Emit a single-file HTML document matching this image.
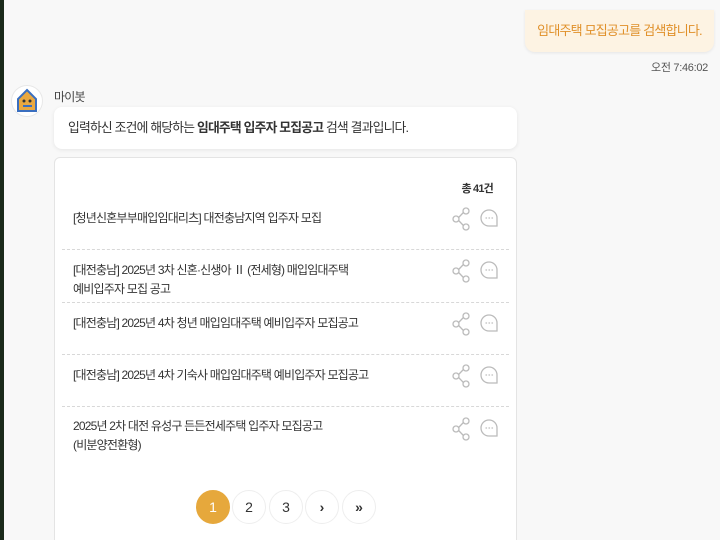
<!DOCTYPE html>
<html><head><meta charset="utf-8"><style>
*{margin:0;padding:0;box-sizing:border-box}
html,body{width:720px;height:540px;overflow:hidden}
body{background:#f8f8f8;font-family:"Liberation Sans","Noto Sans CJK KR",sans-serif;position:relative;color:#333;letter-spacing:-0.8px}
.strip{position:absolute;left:0;top:0;width:4px;height:540px;background:#1a2a1a}
.ubub{position:absolute;left:525px;top:10px;width:189px;height:42px;background:#fdf3e3;border-radius:0 0 10px 10px;box-shadow:0 1px 3px rgba(0,0,0,.08);color:#e0902a;font-size:13px;line-height:42px;text-align:center;white-space:nowrap}
.time{position:absolute;right:12px;top:59px;font-size:11px;color:#555;letter-spacing:-0.3px}
.av{position:absolute;left:11px;top:85px;width:32px;height:32px;border-radius:50%;background:#fff;border:1px solid #e8e8e8}
.name{position:absolute;left:54px;top:88px;font-size:12px;color:#444}
.bub{position:absolute;left:54px;top:107px;width:463px;height:42px;background:#fff;border-radius:8px;box-shadow:0 1px 4px rgba(0,0,0,.08);font-size:12.8px;line-height:42px;padding-left:14px;color:#333;white-space:nowrap}
.card{position:absolute;left:54px;top:157px;width:463px;height:400px;background:#fff;border:1px solid #e4e4e4;border-radius:6px}
.total{position:absolute;right:23px;top:22px;font-size:11px;font-weight:bold;color:#333}
.item{position:absolute;left:8px;width:447px;border-bottom:1px dashed #d8d8d8;height:53px}
.item span{position:absolute;left:11px;top:0;font-size:12px;line-height:19px;color:#333;white-space:nowrap}
.pg{position:absolute;top:490px;width:34px;height:34px;border-radius:50%;border:1px solid #eee;background:#fff;text-align:center;line-height:32px;font-size:14px;color:#333;letter-spacing:0}
</style></head><body>
<div class="strip"></div>
<div class="ubub">임대주택 모집공고를 검색합니다.</div>
<div class="time">오전 7:46:02</div>
<div class="av"><svg width="30" height="30" viewBox="0 0 30 30"><path d="M15 4 L24 13 V25 H6 V13 Z" fill="#e9a840" stroke="#3a6fc0" stroke-width="2"/><circle cx="12" cy="15" r="1.5" fill="#333"/><circle cx="18" cy="15" r="1.5" fill="#333"/><path d="M11 20 H20" stroke="#3a6fc0" stroke-width="2"/></svg></div>
<div class="name">마이봇</div>
<div class="bub">입력하신 조건에 해당하는 <b>임대주택 입주자 모집공고</b> 검색 결과입니다.</div>
<div class="card">
<div class="total">총 41건</div>
</div>
<div class="item" style="top:197px;left:62px"><span style="top:12px">[청년신혼부부매입임대리츠] 대전충남지역 입주자 모집</span></div>
<div class="item" style="top:250px;left:62px"><span style="top:11px">[대전충남] 2025년 3차 신혼·신생아 Ⅱ (전세형) 매입임대주택<br>예비입주자 모집 공고</span></div>
<div class="item" style="top:302px;left:62px"><span style="top:12px">[대전충남] 2025년 4차 청년 매입임대주택 예비입주자 모집공고</span></div>
<div class="item" style="top:354px;left:62px"><span style="top:12px">[대전충남] 2025년 4차 기숙사 매입임대주택 예비입주자 모집공고</span></div>
<div class="item" style="top:406px;left:62px;border:none"><span style="top:11px">2025년 2차 대전 유성구 든든전세주택 입주자 모집공고<br>(비분양전환형)</span></div>
<svg style="position:absolute;left:450px;top:207px" width="52" height="240" viewBox="0 0 52 240">
<g id="ic" fill="none" stroke="#bbb" stroke-width="1.3">
<circle cx="16" cy="4" r="3"/><circle cx="6" cy="12" r="3"/><circle cx="16" cy="20" r="3"/><path d="M8.6 10.5 L13.4 5.5 M8.6 13.5 L13.4 18.5"/>
<path d="M39 3 a8 8 0 0 0 -8 8 a8 8 0 0 0 8 8 h8 v-8 a8 8 0 0 0 -8 -8z"/>
<path d="M36 11h.5M39 11h.5M42 11h.5" stroke-linecap="round"/>
</g>
<use href="#ic" y="52"/><use href="#ic" y="105"/><use href="#ic" y="157"/><use href="#ic" y="210"/>
</svg>
<div class="pg" style="left:196px;background:#e6a83c;border-color:#e6a83c;color:#fff">1</div>
<div class="pg" style="left:232px">2</div>
<div class="pg" style="left:269px">3</div>
<div class="pg" style="left:305px;font-weight:bold">›</div>
<div class="pg" style="left:342px;font-weight:bold">»</div>
</body></html>
